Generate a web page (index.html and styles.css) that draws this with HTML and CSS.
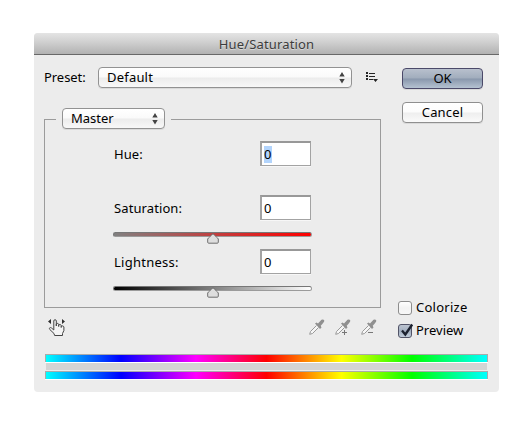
FILE: index.html
```html
<!DOCTYPE html>
<html lang="en">
<head>
<meta charset="utf-8">
<title>Hue/Saturation</title>
<link rel="stylesheet" href="styles.css">
</head>
<body>
<main class="dialog">
  <header class="titlebar"><span class="t-title">Hue/Saturation</span></header>
  <div class="content">
    <div class="columns">
      <section class="left">
        <div class="preset">
          <span class="preset-label">Preset:</span>
          <div class="select select-wide"><span class="t-default">Default</span>
            <svg class="arrows" width="6" height="12" viewBox="0 0 6 12"><path d="M3 0L5.700 4.500H.3zM3 11.500L.3 7h5.400z"/></svg>
          </div>
          <svg class="menu-icon" width="13" height="11" viewBox="0 0 13 11"><path d="M0 0h2v2H0zM0 3h2v2H0zM0 6h2v2H0zM3 1h6v1H3zM3 4h6v1H3zM3 7h4v1H3zM7 7h5L9.500 10z"/></svg>
        </div>
        <div class="group">
          <div class="legend">
            <div class="select select-master"><span class="t-master">Master</span>
              <svg class="arrows" width="6" height="12" viewBox="0 0 6 12"><path d="M3 0L5.700 4.500H.3zM3 11.500L.3 7h5.400z"/></svg>
            </div>
          </div>
          <div class="row"><span class="label">Hue:</span><div class="field"><span class="selected">0</span></div></div>
          <div class="hue-space"></div>
          <div class="row"><span class="label">Saturation:</span><div class="field"><span>0</span></div></div>
          <div class="slider saturation"><svg class="thumb" width="12" height="11" viewBox="0 0 12 11"><path d="M6 .7C7.800 2.800 11 5 11.300 6v3.200q0 1-1 1H1.700q-1 0-1-1V6C1 5 4.200 2.800 6 .7z"/></svg></div>
          <div class="row"><span class="label label-light">Lightness:</span><div class="field"><span>0</span></div></div>
          <div class="slider lightness"><svg class="thumb" width="12" height="11" viewBox="0 0 12 11"><path d="M6 .7C7.800 2.800 11 5 11.300 6v3.200q0 1-1 1H1.700q-1 0-1-1V6C1 5 4.200 2.800 6 .7z"/></svg></div>
        </div>
        <div class="tools">
          <svg class="hand" width="18" height="18" viewBox="0 0 18 18">
            <path class="hand-line" d="M6.600 16.500L6 14.500 1.800 10.500C.7 9 2.200 8 3.500 9L5.800 11V2C5.800.2 8.300.2 8.300 2V7V5.200C8.700 4 10.600 4.200 10.700 5.500V7.500V6.200C11.200 5 13 5.400 13.200 6.500V8.500V7.500C13.700 6.500 15.700 6.800 15.900 8V11.500L14.500 14.500V16.500z"/>
            <path class="hand-arrow" d="M0 2.500L3 0V5zM17 2.500L14 0V5z"/>
          </svg>
          <div class="droppers">
            <svg width="17" height="17" viewBox="0 0 17 17"><path class="tube" d="M7.500 6.500L1.500 12.500 .7 15.300 3.500 14.500 9.500 8.500"/><path class="bulb" d="M6 4.500L7.500 3.500 9 4.500 12.500 .8Q14.500 0 15.300 1.500Q15.500 3 11.700 6.800L12.500 8.500 11 10z"/></svg>
            <svg width="17" height="17" viewBox="0 0 17 17"><path class="tube" d="M7.500 6.500L1.500 12.500 .7 15.300 3.500 14.500 9.500 8.500"/><path class="bulb" d="M6 4.500L7.500 3.500 9 4.500 12.500 .8Q14.500 0 15.300 1.500Q15.500 3 11.700 6.800L12.500 8.500 11 10z"/><path class="sign" d="M7 13.500h5M9.500 11v5"/></svg>
            <svg width="17" height="17" viewBox="0 0 17 17"><path class="tube" d="M7.500 6.500L1.500 12.500 .7 15.300 3.500 14.500 9.500 8.500"/><path class="bulb" d="M6 4.500L7.500 3.500 9 4.500 12.500 .8Q14.500 0 15.300 1.500Q15.500 3 11.700 6.800L12.500 8.500 11 10z"/><path class="sign" d="M7 13.500h5"/></svg>
          </div>
        </div>
      </section>
      <aside class="right">
        <div class="button primary"><span class="t-ok">OK</span></div>
        <div class="button"><span class="t-cancel">Cancel</span></div>
        <div class="checks">
          <div class="check"><i class="box"></i><span class="t-colorize">Colorize</span></div>
          <div class="check"><i class="box checked"><svg class="mark" width="15" height="15" viewBox="0 0 15 15"><path d="M3 7.500L6.300 11.500 13.200 1.500"/></svg></i><span class="t-preview">Preview</span></div>
        </div>
      </aside>
    </div>
    <div class="spectrum">
      <div class="band"></div>
      <div class="range"></div>
      <div class="band"></div>
    </div>
  </div>
</main>
</body>
</html>
```
FILE: styles.css
```css
* { box-sizing: border-box; }
body { margin: 0; background: #fff; font: 13px/19px "Noto Sans", "Open Sans", sans-serif; color: #000; }
svg { display: block; flex: none; }
span { white-space: nowrap; }

.dialog { width: 465px; height: 359px; margin: 33px 0 0 34px; background: #ececec; border-radius: 4px; overflow: hidden; }
.titlebar { height: 22px; display: flex; justify-content: center; line-height: 22px; color: #3c3c3c; background: linear-gradient(#e4e4e4, #cfcfcf 45%, #b2b2b2); border-bottom: 1px solid #686868; text-shadow: 0 1px 0 rgba(255,255,255,.4); letter-spacing: .15px; }
.content { padding: 12px 11px 0 10px; }
.columns { display: flex; gap: 17px; height: 287px; }
.left { width: 337px; flex: none; }
.right { flex: 1; padding-top: 1px; }

.preset { display: flex; align-items: center; height: 21px; }
.preset-label { width: 54px; flex: none; letter-spacing: -.05px; }
.select { display: flex; align-items: center; justify-content: space-between; height: 21px; padding: 0 6px 0 8px; border: 1px solid #929292; border-radius: 4px; background: linear-gradient(#fff, #fafafa 48%, #ececec 52%, #f8f8f8); box-shadow: 0 1px 0 #dadada; }
.select-wide { width: 254px; flex: none; }
.select-master { width: 103px; }
.t-default { letter-spacing: .2px; }
.arrows { fill: #444; }
.menu-icon { fill: #252525; margin-left: 14px; }

.group { height: 189px; margin-top: 31px; border: 1px solid #9b9b9b; padding-left: 68px; }
.legend { width: 115px; padding: 0 6px; margin: -12px 0 12px -57px; background: #ececec; }
.row { display: flex; align-items: center; justify-content: space-between; width: 198px; height: 25px; padding-left: 1px; }
.label { padding-top: 2px; letter-spacing: .1px; }
.label-light { letter-spacing: .25px; }
.field { width: 51px; height: 25px; padding: 2px 0 0 2px; border: 1px solid #a3a3a3; border-top: 2px solid #989898; border-left-width: 2px; background: #fff; box-shadow: 0 1px 0 #f7f7f7; }
.field span { display: inline-block; height: 17px; line-height: 17px; padding: 0 1px 0 0; }
.field .selected { background: #b2d4fc; }
.hue-space { height: 29px; }
.slider { width: 199px; height: 5px; margin: 12px 0; border: 1px solid #757575; border-color: #777 #9a9a9a #9b9b9b #777; border-radius: 3px; }
.saturation { background: linear-gradient(90deg, #808080, #f00); }
.lightness { background: linear-gradient(90deg, #000, #fff); }
.thumb { margin: 0 0 0 93px; fill: #dedede; stroke: #6f6f6f; }

.tools { display: flex; justify-content: space-between; padding: 11px 3px 0 4px; }
.hand-line { fill: #f4f4f4; stroke: #444; stroke-width: 1; }
.hand-arrow { fill: #303030; }
.droppers { display: flex; gap: 9px; }
.tube { fill: #f6f6f6; stroke: #999; }
.bulb { fill: #909090; }
.sign { stroke: #777; fill: none; }

.button { display: flex; justify-content: center; width: 81px; height: 21px; margin: 0 0 13px 4px; border: 1px solid #8f8f8f; border-radius: 4px; background: linear-gradient(#fff, #fcfcfc 48%, #eee 52%, #fafafa); box-shadow: 0 1px 0 #dadada; }
.primary { border-color: #4b4969; background: linear-gradient(#b8c0cd, #a1adbd 48%, #8997ac 52%, #b5c2d1); }
.t-cancel { letter-spacing: .15px; }
.t-colorize { letter-spacing: .25px; }
.checks { padding-top: 160px; }
.check { display: flex; align-items: center; height: 23px; }
.box { width: 14px; height: 14px; flex: none; margin-right: 4px; border: 1px solid #8d8d8d; border-radius: 3px; background: linear-gradient(#fff, #f3f3f3 50%, #f8f8f8); }
.checked { border-color: #515367; background: linear-gradient(#bcc4d0, #a3afc0 50%, #c0ccda); }
.mark { margin: -2px 0 0; overflow: visible; fill: none; stroke: #1c2230; stroke-width: 2.300; }

.spectrum { width: 443px; margin-left: 1px; }
.band { height: 8px; border-top: 1px solid #aaa; border-left: 1px solid #aaa; border-right: 1px solid #aaa; background: linear-gradient(90deg, #0ff, #00f 17%, #f0f 34%, #f00 50%, #ff0 67%, #0f0 83%, #0ff); box-shadow: 0 1px 0 #fff; }
.range { height: 7px; margin: 1px 1px; background: #d4d4d4; }
```
